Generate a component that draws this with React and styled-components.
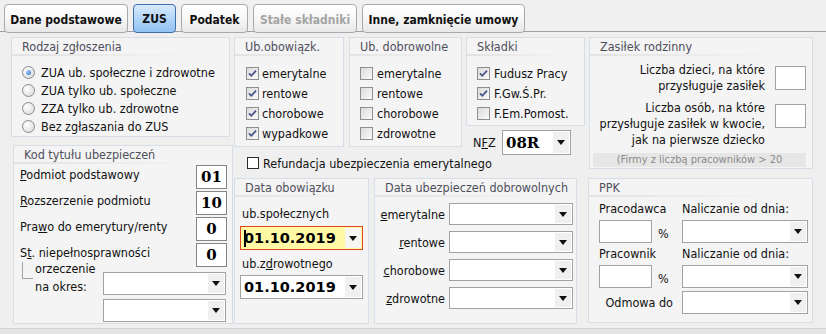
import styled, { createGlobalStyle } from 'styled-components'

const GlobalStyle = createGlobalStyle`
  html, body {
    margin: 0;
    padding: 0;
  }
  body {
    background: #efefef;
    font-family: 'DejaVu Sans Condensed', 'Liberation Sans', sans-serif;
    font-size: 12.5px;
    color: #111;
  }
  * {
    box-sizing: border-box;
  }
`

const Window = styled.div`
  width: 826px;
  height: 334px;
  background: #e4e4e4;
  overflow: hidden;
`

const TabBar = styled.nav`
  display: flex;
  align-items: flex-start;
  height: 32px;
  padding: 4px 0 0 4px;
  background: #f0f0f0;
  border-bottom: 1px solid #9e9e9e;
`

const Tab = styled.div`
  position: relative;
  z-index: 1;
  flex: none;
  width: ${(p) => p.$w}px;
  height: 29px;
  margin-right: 5px;
  border: 1px solid ${(p) => (p.$active ? '#3e6eac' : '#a9a9a9')};
  border-radius: 4px;
  background: ${(p) =>
    p.$active
      ? 'linear-gradient(#d8eafd, #b6d7f8 45%, #92c2f1)'
      : 'linear-gradient(#ffffff, #f8f8f8 45%, #e8e8e8)'};
  color: ${(p) => (p.$disabled ? '#a4a4a4' : '#111')};
  font-weight: bold;
  font-size: 12px;
  display: flex;
  align-items: center;
  justify-content: center;
  padding-top: ${(p) => (p.$active ? 0 : 3)}px;
`

const Page = styled.main`
  display: flex;
  align-items: flex-start;
  height: 297px;
  padding: 5px 0 0 11px;
  background: #efefef;
  border-bottom: 1px solid #d4d4d4;
`

const Column = styled.div`
  display: flex;
  flex-direction: column;
  flex: none;
  width: ${(p) => p.$w}px;
  margin-left: ${(p) => p.$ml || 0}px;
`

const Row = styled.div`
  display: flex;
  align-items: flex-start;
  margin-top: ${(p) => p.$mt || 0}px;
`

const Group = styled.section`
  display: flex;
  flex-direction: column;
  flex: none;
  width: ${(p) => p.$w}px;
  height: ${(p) => p.$h}px;
  margin-left: ${(p) => p.$ml || 0}px;
  margin-top: ${(p) => p.$mt || 0}px;
  background: #f4f4f4;
  border: 1px solid #d7dee7;
`

const GroupTitle = styled.h3`
  flex: none;
  margin: 0;
  height: 18px;
  line-height: 17px;
  padding-left: 10px;
  font-weight: normal;
  font-size: 12.5px;
  color: #4f4f5c;
  background: linear-gradient(to right, #e2e2e2, rgba(226, 226, 226, 0) 85%) left bottom / 100% 2px no-repeat;
`

const Key = styled.span`
  text-decoration: underline;
`

/* radios and checkboxes */

const OptionList = styled.div`
  display: flex;
  flex-direction: column;
  padding: 7px 0 0 ${(p) => p.$pl || 10}px;
`

const Option = styled.label`
  display: flex;
  align-items: center;
  gap: ${(p) => p.$gap || 4}px;
  height: ${(p) => p.$h || 20}px;
  white-space: nowrap;
`

const Radio = styled.span`
  flex: none;
  width: 13px;
  height: 13px;
  border-radius: 50%;
  border: 1px solid #8b8b8b;
  background: radial-gradient(circle at 35% 35%, #ffffff, #d6d6d6);
  display: flex;
  align-items: center;
  justify-content: center;

  &::after {
    content: '';
    display: ${(p) => (p.$on ? 'block' : 'none')};
    width: 5px;
    height: 5px;
    border-radius: 50%;
    background: radial-gradient(circle at 35% 35%, #a6d4ff, #1f5fbf);
  }
`

const Box = styled.span`
  flex: none;
  width: 13px;
  height: 13px;
  border: 1px solid #8e8e8e;
  background: linear-gradient(135deg, #dadada, #fbfbfb);
  display: flex;
  align-items: center;
  justify-content: center;
`

const PlainBox = styled.span`
  flex: none;
  width: 12px;
  height: 12px;
  border: 1px solid #2b2b2b;
  background: #fff;
`

const Check = ({ on }) => (
  <Box>
    {on && (
      <svg width='11' height='11' viewBox='0 0 11 11'>
        <path d='M2 5.4 L4.3 7.8 L9 2.6' fill='none' stroke='#4a5889' strokeWidth='1.8' />
      </svg>
    )}
  </Box>
)

/* combos and inputs */

const ComboBox = styled.div`
  display: flex;
  flex: none;
  width: ${(p) => p.$w}px;
  height: ${(p) => p.$h || 23}px;
  border: 1px solid ${(p) => (p.$focus ? '#e2461e' : '#a2a2a2')};
  background: ${(p) => (p.$focus ? '#fff9a6' : '#fff')};
`

const ComboValue = styled.div`
  flex: 1;
  display: flex;
  align-items: center;
  padding-left: 3px;
  font-family: ${(p) => (p.$serif ? "'DejaVu Serif', serif" : "'DejaVu Sans', sans-serif")};
  font-weight: bold;
  font-size: ${(p) => (p.$serif ? 15 : 14.5)}px;
  color: #000;
`

const Caret = styled.span`
  width: 2px;
  height: 17px;
  margin-right: -2px;
  background: #000;
`

const ComboButton = styled.div`
  flex: none;
  width: 16px;
  margin: 1px;
  background: ${(p) => (p.$focus ? '#f7f7f2' : '#f0f0f0')};
  display: flex;
  align-items: center;
  justify-content: center;

  &::after {
    content: '';
    border-left: 4.5px solid transparent;
    border-right: 4.5px solid transparent;
    border-top: 5px solid #111;
  }
`

const Combo = ({ w, h, value, focus, serif }) => (
  <ComboBox $w={w} $h={h} $focus={focus}>
    <ComboValue $serif={serif}>
      {focus && <Caret />}
      {value}
    </ComboValue>
    <ComboButton $focus={focus} />
  </ComboBox>
)

const InputBox = styled.div`
  flex: none;
  width: ${(p) => p.$w}px;
  height: ${(p) => p.$h}px;
  margin-top: ${(p) => p.$mt || 0}px;
  border: 1px solid ${(p) => (p.$dark ? '#858585' : '#a2a2a2')};
  background: #fff;
  display: flex;
  align-items: center;
  justify-content: center;
  font-family: 'DejaVu Serif', serif;
  font-weight: bold;
  font-size: 15px;
  color: #000;
`

/* Składki / NFZ */

const NfzRow = styled.div`
  display: flex;
  align-items: center;
  margin-top: 4px;
  padding-left: 7px;
`

const NfzLabel = styled.span`
  width: 29px;
`

const RefundRow = styled.label`
  display: flex;
  align-items: center;
  gap: 4px;
  height: 16px;
  padding-left: 13px;
`

/* Kod tytułu */

const KodBody = styled.div`
  display: flex;
  flex-direction: column;
  gap: 2px;
  padding: 1px 5px 0 6px;
`

const KodRow = styled.div`
  display: flex;
  justify-content: space-between;
  align-items: flex-start;
  height: 24px;
`

const KodLabel = styled.span`
  margin-top: 2px;
  line-height: 16px;
`

const OrzSection = styled.div`
  display: flex;
  margin-top: -9px;
`

const OrzLeft = styled.div`
  display: flex;
  width: 83px;
`

const OrzMark = styled.span`
  flex: none;
  width: 11px;
  height: 17px;
  margin: 2px 0 0 2px;
  border-left: 1px solid #a3a3a3;
  border-bottom: 1px solid #a3a3a3;
`

const OrzText = styled.div`
  margin-left: 2px;
  line-height: 18px;
`

const OrzCombos = styled.div`
  display: flex;
  flex-direction: column;
  gap: 4px;
  padding-top: 12px;
`

/* Data obowiązku */

const DateBody = styled.div`
  display: flex;
  flex-direction: column;
  padding: 9px 0 0 5px;
`

const DateLabel = styled.div`
  line-height: 16px;
  margin: ${(p) => p.$mt || 0}px 0 ${(p) => p.$mb}px 2px;
`

/* Data ubezpieczeń dobrowolnych */

const DobBody = styled.div`
  display: flex;
  flex-direction: column;
  gap: 6px;
  padding: 6px 3px 0 0;
`

const DobRow = styled.div`
  display: flex;
  align-items: center;
  justify-content: flex-end;
  gap: 4px;
`

/* Zasiłek rodzinny */

const ZasBody = styled.div`
  display: flex;
  flex-direction: column;
  gap: 6px;
  padding: 6px 6px 0 3px;
`

const ZasRow = styled.div`
  display: flex;
  justify-content: flex-end;
  gap: 10px;
`

const ZasText = styled.div`
  text-align: right;
  line-height: 16px;
`

const Note = styled.div`
  height: 14px;
  margin: -1px 0 0 0;
  background: #e6e6e6;
  color: #8a8a8a;
  font-size: 11px;
  line-height: 14px;
  text-align: center;
`

/* PPK */

const PpkGrid = styled.div`
  display: grid;
  grid-template-columns: 83px 126px;
  grid-template-rows: 16px 23px 16px 23px 23px;
  row-gap: 3px;
  padding: 4px 0 0 10px;
  line-height: 16px;
`

const PercentCell = styled.div`
  display: flex;
  align-items: flex-end;
  gap: 6px;
`

const Percent = styled.span`
  line-height: 16px;
  padding-bottom: 1px;
`

const RightLabel = styled.div`
  align-self: center;
  text-align: right;
  padding-right: 9px;
`

const tabs = [
  { name: 'Dane podstawowe', w: 124 },
  { name: 'ZUS', w: 43, active: true },
  { name: 'Podatek', w: 67 },
  { name: 'Stałe składniki', w: 104, disabled: true },
  { name: 'Inne, zamknięcie umowy', w: 163 },
]

const rodzaj = [
  'ZUA ub. społeczne i zdrowotne',
  'ZUA tylko ub. społeczne',
  'ZZA tylko ub. zdrowotne',
  'Bez zgłaszania do ZUS',
]

const obowiazkowe = ['emerytalne', 'rentowe', 'chorobowe', 'wypadkowe']
const dobrowolne = ['emerytalne', 'rentowe', 'chorobowe', 'zdrowotne']

const skladki = [
  { name: 'Fudusz Pracy', on: true },
  { name: 'F.Gw.Ś.Pr.', on: true },
  { name: 'F.Em.Pomost.', on: false },
]

export default function App() {
  return (
    <Window>
      <GlobalStyle />
      <TabBar>
        {tabs.map((t) => (
          <Tab key={t.name} $w={t.w} $active={t.active} $disabled={t.disabled}>
            {t.name}
          </Tab>
        ))}
      </TabBar>

      <Page>
        <Column $w={222}>
          <Group $w={219} $h={100}>
            <GroupTitle>Rodzaj zgłoszenia</GroupTitle>
            <OptionList>
              {rodzaj.map((r, i) => (
                <Option key={r} $h={18} $gap={6}>
                  <Radio $on={i === 0} />
                  {r}
                </Option>
              ))}
            </OptionList>
          </Group>

          <Group $w={220} $h={179} $ml={2} $mt={8}>
            <GroupTitle>Kod tytułu ubezpieczeń</GroupTitle>
            <KodBody>
              <KodRow>
                <KodLabel><Key>P</Key>odmiot podstawowy</KodLabel>
                <InputBox $w={31} $h={24} $dark>01</InputBox>
              </KodRow>
              <KodRow>
                <KodLabel><Key>R</Key>ozszerzenie podmiotu</KodLabel>
                <InputBox $w={31} $h={24} $dark>10</InputBox>
              </KodRow>
              <KodRow>
                <KodLabel>Pra<Key>w</Key>o do emerytury/renty</KodLabel>
                <InputBox $w={31} $h={24} $dark>0</InputBox>
              </KodRow>
              <KodRow>
                <KodLabel>S<Key>t</Key>. niepełnosprawności</KodLabel>
                <InputBox $w={31} $h={24} $dark>0</InputBox>
              </KodRow>
              <OrzSection>
                <OrzLeft>
                  <OrzMark />
                  <OrzText>
                    orzeczenie
                    <br />
                    na okres:
                  </OrzText>
                </OrzLeft>
                <OrzCombos>
                  <Combo w={123} />
                  <Combo w={123} />
                </OrzCombos>
              </OrzSection>
            </KodBody>
          </Group>
        </Column>

        <Column $w={351} $ml={1}>
          <Row>
            <Group $w={110} $h={110}>
              <GroupTitle>Ub.obowiązk.</GroupTitle>
              <OptionList $pl={11}>
                {obowiazkowe.map((o) => (
                  <Option key={o} $gap={3}>
                    <Check on />
                    {o}
                  </Option>
                ))}
              </OptionList>
            </Group>

            <Group $w={113} $h={110} $ml={5}>
              <GroupTitle>Ub. dobrowolne</GroupTitle>
              <OptionList $pl={10}>
                {dobrowolne.map((o) => (
                  <Option key={o}>
                    <Check />
                    {o}
                  </Option>
                ))}
              </OptionList>
            </Group>

            <Column $w={119} $ml={4}>
              <Group $w={119} $h={89}>
                <GroupTitle>Składki</GroupTitle>
                <OptionList $pl={10}>
                  {skladki.map((s) => (
                    <Option key={s.name}>
                      <Check on={s.on} />
                      {s.name}
                    </Option>
                  ))}
                </OptionList>
              </Group>
              <NfzRow>
                <NfzLabel>
                  N<Key>F</Key>Z
                </NfzLabel>
                <Combo w={69} h={25} value='08R' serif />
              </NfzRow>
            </Column>
          </Row>

          <RefundRow>
            <PlainBox />
            Refundacja ubezpieczenia emerytalnego
          </RefundRow>

          <Row $mt={7}>
            <Group $w={135} $h={146}>
              <GroupTitle>Data obowiązku</GroupTitle>
              <DateBody>
                <DateLabel $mb={4}>ub.społecznych</DateLabel>
                <Combo w={123} h={24} value='01.10.2019' focus />
                <DateLabel $mt={6} $mb={3}>
                  ub.z<Key>d</Key>rowotnego
                </DateLabel>
                <Combo w={123} h={24} value='01.10.2019' />
              </DateBody>
            </Group>

            <Group $w={203} $h={146} $ml={5}>
              <GroupTitle>Data ubezpieczeń dobrowolnych</GroupTitle>
              <DobBody>
                {dobrowolne.map((d) => (
                  <DobRow key={d}>
                    <span>
                      <Key>{d[0]}</Key>
                      {d.slice(1)}
                    </span>
                    <Combo w={124} h={22} />
                  </DobRow>
                ))}
              </DobBody>
            </Group>
          </Row>
        </Column>

        <Column $w={225} $ml={3}>
          <Group $w={224} $h={132} $ml={1}>
            <GroupTitle>Zasiłek rodzinny</GroupTitle>
            <ZasBody>
              <ZasRow>
                <ZasText>
                  Liczba dzieci, na które
                  <br />
                  przysługuje zasiłek
                </ZasText>
                <InputBox $w={31} $h={24} $mt={4} />
              </ZasRow>
              <ZasRow>
                <ZasText>
                  Liczba osób, na które
                  <br />
                  przysługuje zasiłek w kwocie,
                  <br />
                  jak na pierwsze dziecko
                </ZasText>
                <InputBox $w={31} $h={24} $mt={4} />
              </ZasRow>
              <Note>(Firmy z liczbą pracowników &gt; 20</Note>
            </ZasBody>
          </Group>

          <Group $w={225} $h={145} $mt={9}>
            <GroupTitle>PPK</GroupTitle>
            <PpkGrid>
              <div>Pracodawca</div>
              <div>Naliczanie od dnia:</div>
              <PercentCell>
                <InputBox $w={53} $h={23} />
                <Percent>%</Percent>
              </PercentCell>
              <Combo w={126} />
              <div>Pracownik</div>
              <div>Naliczanie od dnia:</div>
              <PercentCell>
                <InputBox $w={53} $h={23} />
                <Percent>%</Percent>
              </PercentCell>
              <Combo w={126} />
              <RightLabel>Odmowa do</RightLabel>
              <Combo w={126} />
            </PpkGrid>
          </Group>
        </Column>
      </Page>
    </Window>
  )
}
